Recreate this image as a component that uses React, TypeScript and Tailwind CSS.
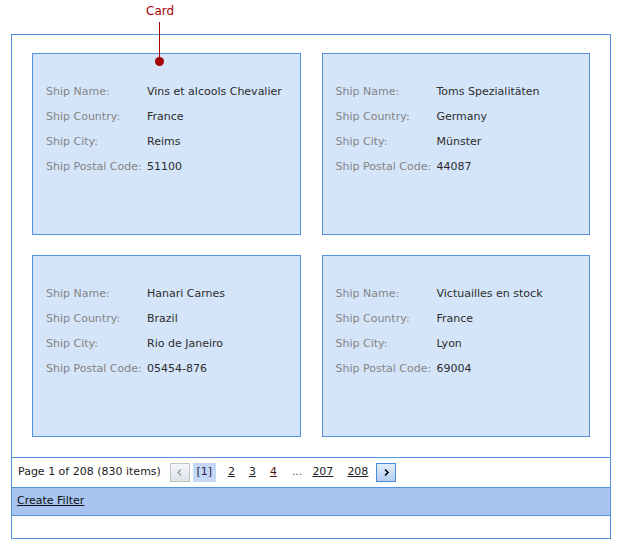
import React from "react";

const cards = [
  { name: "Vins et alcools Chevalier", country: "France", city: "Reims", code: "51100" },
  { name: "Toms Spezialitäten", country: "Germany", city: "Münster", code: "44087" },
  { name: "Hanari Carnes", country: "Brazil", city: "Rio de Janeiro", code: "05454-876" },
  { name: "Victuailles en stock", country: "France", city: "Lyon", code: "69004" },
];

function Card({ c }: { c: (typeof cards)[number] }) {
  const rows: [string, string][] = [
    ["Ship Name:", c.name],
    ["Ship Country:", c.country],
    ["Ship City:", c.city],
    ["Ship Postal Code:", c.code],
  ];
  return (
    <div className="h-[182px] border border-[#5592db] bg-[#d5e5f9] pl-[13px] pt-[26px]">
      {rows.map(([l, v]) => (
        <div key={l} className="flex h-[25px] items-center">
          <div className="w-[101px] text-[#848484]">{l}</div>
          <div className="text-[#2c2c2c]">{v}</div>
        </div>
      ))}
    </div>
  );
}

export default function App() {
  return (
    <div
      className="relative h-[550px] w-[620px] bg-white text-[11px]"
      style={{ fontFamily: '"DejaVu Sans", Tahoma, sans-serif' }}
    >
      {/* annotation */}
      <div className="absolute left-[146px] top-[3px] text-[12px] leading-[16px] text-[#a30000]">Card</div>
      <div className="absolute left-[159px] top-[22px] h-[39px] w-px bg-[#a30000]" />
      <div className="absolute left-[155px] top-[57px] h-[9px] w-[9px] rounded-full bg-[#a30000] z-10" />

      <div className="ml-[11px] pt-[34px]">
        <div className="w-[600px] border border-[#5592db]">
          <div className="grid grid-cols-2 gap-x-[21px] gap-y-[20px] px-[20px] pt-[18px] pb-[20px]">
            {cards.map((c) => (
              <Card key={c.name} c={c} />
            ))}
          </div>
          <div className="flex h-[30px] items-center border-t border-[#5592db] pl-[6px] text-[#222]">
            <span>Page 1 of 208 (830 items)</span>
            <div className="ml-[9px] flex h-[19px] w-[20px] items-center justify-center border border-[#c2c2c2] bg-gradient-to-b from-[#f4f6f9] to-[#dde3ea]">
              <svg width="8" height="9" viewBox="0 0 8 9">
                <path d="M5 1.5 L2 4.5 L5 7.5" stroke="#9a9a9a" strokeWidth="1.2" fill="none" />
              </svg>
            </div>
            <div className="ml-[3px] flex h-[19px] w-[23px] items-center justify-center bg-[#c3d9f6] text-[#33194f]">[1]</div>
            <span className="ml-[12px] underline text-[#222]">2</span>
            <span className="ml-[14px] underline text-[#222]">3</span>
            <span className="ml-[14px] underline text-[#4d1414]">4</span>
            <span className="ml-[15px] text-[#555]">...</span>
            <span className="ml-[10px] underline text-[#222]">207</span>
            <span className="ml-[14px] underline text-[#222]">208</span>
            <div className="ml-[8px] flex h-[19px] w-[20px] items-center justify-center border border-[#4b8ad8] bg-gradient-to-b from-[#e3eefc] to-[#b3cdf2]">
              <svg width="8" height="9" viewBox="0 0 8 9">
                <path d="M3 1.5 L6 4.5 L3 7.5" stroke="#000" strokeWidth="1.6" fill="none" />
              </svg>
            </div>
          </div>
          <div className="flex h-[29px] items-center border-y border-[#5592db] bg-[#a8c4f1] pl-[5px]">
            <span className="underline text-[#111]">Create Filter</span>
          </div>
          <div className="h-[22px]" />
        </div>
      </div>
    </div>
  );
}
